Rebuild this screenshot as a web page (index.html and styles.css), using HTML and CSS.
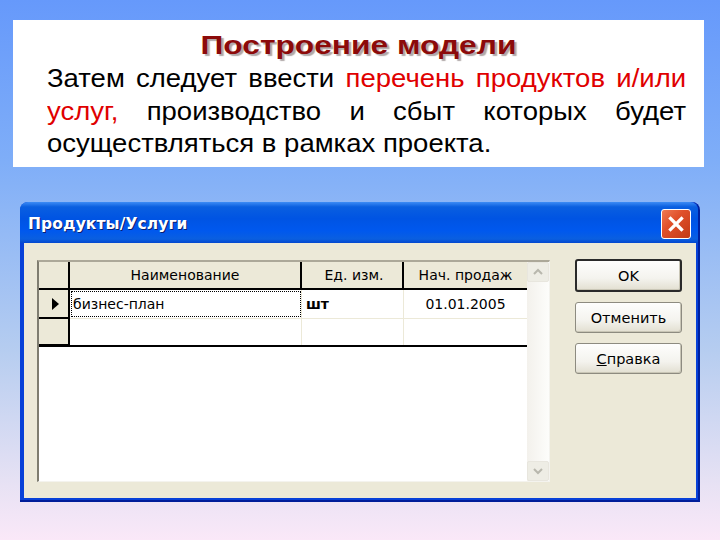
FILE: index.html
```html
<!DOCTYPE html>
<html lang="ru">
<head>
<meta charset="utf-8">
<title>Построение модели</title>
<link rel="stylesheet" href="styles.css">
</head>
<body>
<div class="slide">
  <div class="textbox">
    <h1 class="title">Построение модели</h1>
    <p class="body"><span>Затем следует ввести</span> <span class="red">перечень продуктов и/или</span> <span class="red">услуг,</span> <span>производство и сбыт которых будет</span> <span>осуществляться в рамках проекта.</span></p>
  </div>

  <div class="dialog">
    <div class="titlebar">
      <span class="caption">Продукты/Услуги</span>
      <span class="close">
        <svg width="18" height="18" viewBox="0 0 18 18"><path d="M3.5 3.5 L14.5 14.5 M14.5 3.5 L3.5 14.5" stroke="#fff" stroke-width="3.2" stroke-linecap="square"/></svg>
      </span>
    </div>
    <div class="client">
      <div class="gridbox">
        <div class="grid">
          <div class="row head">
            <div class="cell ind"></div>
            <div class="cell c1">Наименование</div>
            <div class="cell c2">Ед. изм.</div>
            <div class="cell c3">Нач. продаж</div>
          </div>
          <div class="row data">
            <div class="cell ind"><span class="arrow"></span></div>
            <div class="cell c1 focus">бизнес-план</div>
            <div class="cell c2 bold">шт</div>
            <div class="cell c3 center">01.01.2005</div>
          </div>
          <div class="row data last">
            <div class="cell ind"></div>
            <div class="cell c1"></div>
            <div class="cell c2"></div>
            <div class="cell c3"></div>
          </div>
        </div>
        <div class="scroll">
          <div class="sbtn"><svg width="12" height="8" viewBox="0 0 12 8"><path d="M2 6 L6 2 L10 6" fill="none" stroke="#b8b7ad" stroke-width="2"/></svg></div>
          <div class="sbtn"><svg width="12" height="8" viewBox="0 0 12 8"><path d="M2 2 L6 6 L10 2" fill="none" stroke="#b8b7ad" stroke-width="2"/></svg></div>
        </div>
      </div>
      <div class="buttons">
        <div class="btn default">OK</div>
        <div class="btn">Отменить</div>
        <div class="btn"><u>С</u>правка</div>
      </div>
    </div>
  </div>
</div>
</body>
</html>
```

FILE: styles.css
```css
html, body {
  margin: 0;
  padding: 0;
}
body {
  width: 720px;
  height: 540px;
  overflow: hidden;
  background: linear-gradient(to bottom, #6699fb 0%, #7faef8 30%, #b6cdf0 65%, #e8e2f4 90%, #fae8f8 100%);
  font-family: "Liberation Sans", Arial, sans-serif;
}
.slide {
  padding: 20px 0 0 13px;
}
.textbox {
  width: 691px;
  height: 147px;
  box-sizing: border-box;
  background: #fff;
  padding: 8px 26px 0 26px;
  overflow: hidden;
}
.title {
  width: fit-content;
  margin: 0 auto;
  font-size: 26px;
  line-height: 34px;
  font-weight: bold;
  color: #8c0a0a;
  text-shadow: 2px 2px 1px #b0a8a8;
  transform: scaleX(1.22);
  transform-origin: center top;
}
.body {
  margin: 0 0 0 8px;
  width: 581px;
  font-size: 25px;
  line-height: 32.5px;
  text-align: justify;
  color: #000;
  transform: scaleX(1.1);
  transform-origin: left top;
}
.red {
  color: #e00000;
}

/* dialog */
.dialog {
  margin: 35px 0 0 7px;
  width: 680px;
  height: 300px;
  box-sizing: border-box;
  display: flex;
  flex-direction: column;
  background: #0841d8;
  border-radius: 8px 8px 0 0;
  border-bottom: 2px solid #001e9a;
  border-right: 2px solid #0021a0;
}
.titlebar {
  height: 41px;
  flex: none;
  display: flex;
  align-items: center;
  justify-content: space-between;
  padding: 0 7px 0 8px;
  border-radius: 8px 8px 0 0;
  background: linear-gradient(to bottom, #3d8cf5 0%, #0a5fe0 12%, #0054e3 40%, #0058ee 70%, #0a5fe0 90%, #0348cf 100%);
}
.caption {
  color: #fff;
  font-family: "DejaVu Sans", "Liberation Sans", sans-serif;
  font-weight: bold;
  font-size: 15.5px;
  letter-spacing: 0.1px;
  text-shadow: 1px 1px 0 #0a1e70;
  padding-top: 2px;
}
.close {
  width: 28px;
  height: 28px;
  margin-top: 3px;
  border: 1px solid #fff;
  border-radius: 3px;
  display: flex;
  align-items: center;
  justify-content: center;
  background: linear-gradient(135deg, #f07a55 0%, #e0502a 40%, #c23a16 100%);
}
.client {
  flex: 1;
  margin: 0 2px 2px 4px;
  background: #ece9d8;
  display: flex;
  padding: 17px 0 0 13px;
}
.gridbox {
  width: 513px;
  height: 222px;
  box-sizing: border-box;
  background: #fff;
  border-top: 2px solid #aca899;
  border-left: 2px solid #7f7d70;
  border-right: 1px solid #f4f3ee;
  border-bottom: 1px solid #f4f3ee;
  display: flex;
  position: relative;
}
.grid {
  width: 488px;
  align-self: flex-start;
  border-right: 2px solid #000;
  border-bottom: 2px solid #000;
}
.row {
  display: flex;
  height: 28px;
}
.row.head {
  height: 26px;
  border-bottom: 2px solid #000;
}
.row.data {
  border-bottom: 1px solid #ece9d8;
}
.row.data.last {
  border-bottom: none;
  height: 26px;
}
.cell {
  box-sizing: border-box;
  font-family: "DejaVu Sans", "Liberation Sans", sans-serif;
  font-size: 14px;
  color: #000;
  display: flex;
  align-items: center;
  white-space: nowrap;
  overflow: hidden;
  border-right: 1px solid #ece9d8;
}
.head .cell {
  background: #ece9d8;
  justify-content: center;
  border-right: 2px solid #000;
}
.head .cell:last-child,
.cell.c3 {
  border-right: none;
}
.cell.ind {
  width: 31px;
  background: #ece9d8;
  border-right: 2px solid #000;
  justify-content: center;
}
.row.data .cell.ind {
  border-bottom: 2px solid #000;
  margin-bottom: -1px;
}
.cell.c1 { width: 232px; }
.cell.c2 { width: 102px; padding-left: 4px; }
.row.data .cell.c2 { border-right: 1px solid #ece9d8; }
.cell.c3 { flex: 1; }
.cell.center { justify-content: center; }
.cell.bold { font-weight: bold; }
.cell.focus {
  outline: 1px dotted #000;
  outline-offset: -2px;
  padding-left: 3px;
  border-right: 1px solid #ece9d8;
}
.arrow {
  width: 0;
  height: 0;
  border-left: 7px solid #000;
  border-top: 6px solid transparent;
  border-bottom: 6px solid transparent;
  margin-left: 4px;
}
.scroll {
  position: absolute;
  right: 0;
  top: 0;
  bottom: 0;
  width: 22px;
  display: flex;
  flex-direction: column;
  justify-content: space-between;
  background: linear-gradient(to right, #f3f1ec, #fdfdfb);
}
.sbtn {
  height: 20px;
  box-sizing: border-box;
  border: 1px solid #e8e6de;
  border-radius: 2px;
  background: #eeede5;
  display: flex;
  align-items: center;
  justify-content: center;
}
.buttons {
  margin-left: 25px;
  display: flex;
  flex-direction: column;
  gap: 10px;
  margin-top: -1px;
}
.btn {
  width: 107px;
  height: 31px;
  box-sizing: border-box;
  border: 1px solid #8d8b80;
  border-radius: 3px;
  background: linear-gradient(to bottom, #fefefd 0%, #f4f3ee 60%, #e2dfd1 100%);
  display: flex;
  align-items: center;
  justify-content: center;
  font-family: "DejaVu Sans", "Liberation Sans", sans-serif;
  font-size: 14.5px;
  color: #000;
  box-shadow: inset -1px -1px 0 #c9c6b6;
}
.btn.default {
  height: 33px;
  border: 2px solid #2a2a2a;
}
.btn u { text-decoration: underline; }
```
